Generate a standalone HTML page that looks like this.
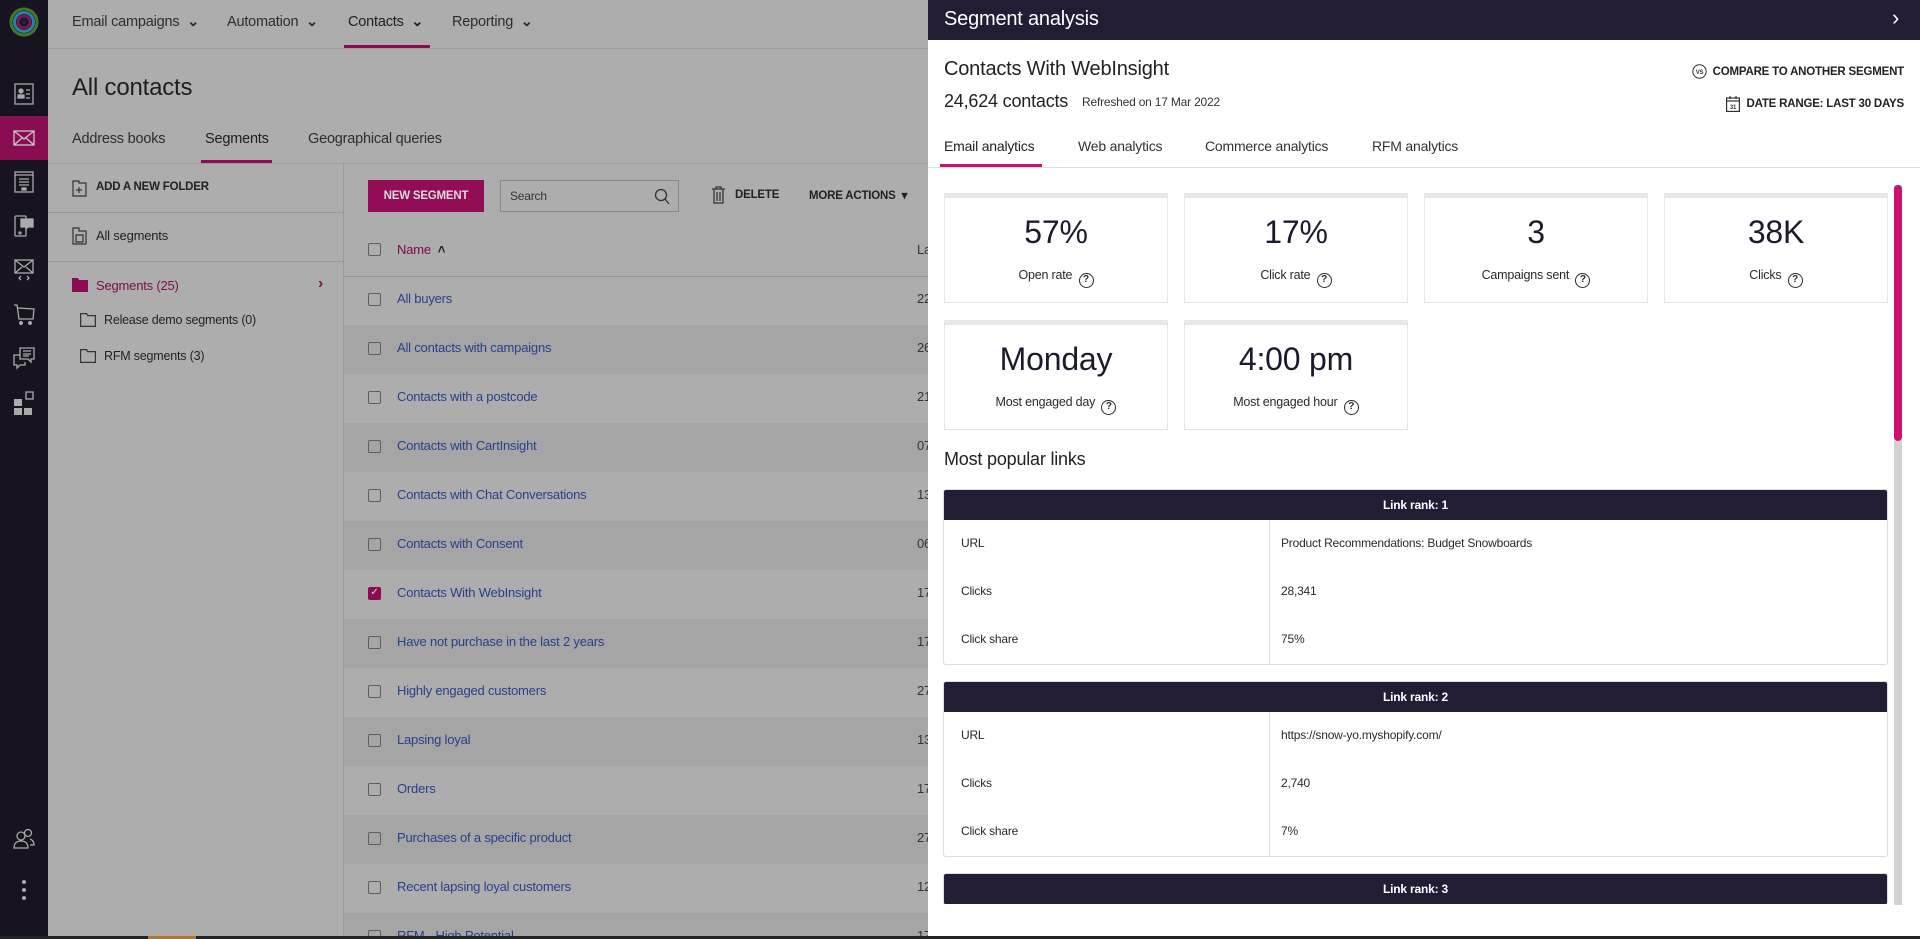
<!DOCTYPE html>
<html><head><meta charset="utf-8"><style>
*{box-sizing:border-box;margin:0;padding:0}
html{width:1920px;height:939px;overflow:hidden}
body{width:1920px;height:939px;overflow:hidden;font-family:"Liberation Sans",sans-serif;background:#adadad;position:relative;color:#2a2a2a;letter-spacing:-0.2px}
.a{position:absolute;white-space:nowrap}
#side{position:absolute;left:0;top:0;width:48px;height:939px;background:#17131f}
.ic{position:absolute;left:12px;width:24px;height:24px}
.nav{font-size:14.5px;color:#2d2d2d;top:14px}
#list{position:absolute;left:344px;top:0;width:584px;height:936px;overflow:hidden}
.row{position:absolute;left:0;width:584px;height:49px}
.row.d{background:#a5a5a5}
.cb{position:absolute;left:24px;top:17px;width:13px;height:13px;border:1.5px solid #5e5e5e;border-radius:2px}
.rt{position:absolute;left:53px;top:15px;font-size:13px;color:#26418a}
.rd{position:absolute;left:573px;top:15px;font-size:13px;color:#333}
#panel{position:absolute;left:928px;top:0;width:992px;height:936px;background:#fff;overflow:hidden}
.card{position:absolute;width:224px;height:110px;border:1px solid #e6e6e6;border-top:5px solid #e8e8e8;text-align:center;background:#fff}
.card .n{position:absolute;left:0;right:0;top:16px;font-size:32px;color:#1d1a2e}
.card .l{position:absolute;left:0;right:0;top:70px;font-size:12.5px;color:#2a2a2a}
.q{display:inline-block;width:15px;height:15px;border:1.5px solid #2a2a2a;border-radius:50%;font-size:10px;line-height:12px;text-align:center;font-weight:bold;vertical-align:-3px;margin-left:3px;letter-spacing:0}
.tbl{position:absolute;left:15px;width:945px;border:1px solid #ddd;border-radius:3px;overflow:hidden}
.th{height:30px;background:#221d35;color:#fff;font-size:12px;font-weight:bold;text-align:center;line-height:30px}
.tr{height:48px;position:relative;font-size:12px;color:#2a2a2a}
.tr span{position:absolute;top:16px}
.tr .k{left:17px}.tr .v{left:337px}
.div{position:absolute;left:325px;top:30px;bottom:0;border-left:1px solid #ddd}
.rgt{position:absolute;right:16px;display:flex;align-items:center;gap:6px;font-size:11.5px;font-weight:bold;color:#222;white-space:nowrap}
</style></head><body>
<div id="side">
<svg class="a" style="left:9px;top:7px" width="30" height="30" viewBox="0 0 30 30"><circle cx="15" cy="15" r="13" fill="none" stroke="#3f7a2a" stroke-width="3"/><circle cx="15" cy="15" r="9.5" fill="none" stroke="#2b7fa8" stroke-width="3"/><circle cx="15" cy="15" r="6" fill="none" stroke="#7a1a55" stroke-width="3"/><circle cx="15" cy="15" r="2.5" fill="#2a2140"/></svg>
<div class="a" style="left:0;top:116px;width:48px;height:44px;background:#8a0c52"></div>
<svg class="ic" style="top:82px" viewBox="0 0 24 24" fill="none" stroke="#aaa" stroke-width="1.3"><rect x="3" y="2" width="18" height="20"/><circle cx="9" cy="9" r="2" fill="#aaa"/><path d="M6 16h6v-3H6z" fill="#aaa"/><path d="M14 8h4M14 12h4M14 16h4"/></svg>
<svg class="ic" style="top:126px" viewBox="0 0 24 24" fill="none" stroke="#c9c9c9" stroke-width="1.3"><rect x="2" y="5" width="20" height="14"/><path d="M2 5l10 8 10-8M2 19l8-7M22 19l-8-7"/></svg>
<svg class="ic" style="top:170px" viewBox="0 0 24 24" fill="none" stroke="#aaa" stroke-width="1.3"><rect x="3" y="2" width="18" height="20"/><path d="M3 5h18M7 9h10M7 12h10M7 15h10"/><rect x="10" y="18" width="4" height="2" fill="#aaa"/></svg>
<svg class="ic" style="top:214px" viewBox="0 0 24 24" fill="none" stroke="#aaa" stroke-width="1.3"><rect x="3" y="2" width="11" height="20" rx="1"/><path d="M9 5h12v8h-5l-2 2v-2H9z" fill="#aaa"/><circle cx="8" cy="19" r="1"/></svg>
<svg class="ic" style="top:258px" viewBox="0 0 24 24" fill="none" stroke="#aaa" stroke-width="1.3"><rect x="3" y="2" width="18" height="13"/><path d="M3 2l9 7 9-7M3 15l7-6M21 15l-7-6M9 18l-2 2 2 2M15 18l2 2-2 2"/></svg>
<svg class="ic" style="top:302px" viewBox="0 0 24 24" fill="none" stroke="#aaa" stroke-width="1.3"><path d="M2 3h3l2 14h14l1-10-16-1"/><circle cx="9" cy="21" r="1.3" fill="#aaa"/><circle cx="18" cy="21" r="1.3" fill="#aaa"/></svg>
<svg class="ic" style="top:346px" viewBox="0 0 24 24" fill="none" stroke="#aaa" stroke-width="1.3"><path d="M8 2h14v11h-3v3l-3-3H8z"/><path d="M11 5h8M11 8h8M11 10h6"/><path d="M8 9H2v10h3v3l3-3h5v-3"/></svg>
<svg class="ic" style="top:391px" viewBox="0 0 24 24"><rect x="2" y="8" width="8" height="7" fill="#aaa"/><rect x="2" y="17" width="8" height="7" fill="#aaa"/><rect x="12" y="17" width="8" height="7" fill="#aaa"/><rect x="14" y="1" width="7" height="7" fill="none" stroke="#aaa" stroke-width="1.3"/></svg>
<svg class="ic" style="top:827px" viewBox="0 0 24 24" fill="none" stroke="#aaa" stroke-width="1.3"><circle cx="9" cy="9" r="4"/><path d="M2 21c0-5 3-7 7-7s7 2 7 7z"/><circle cx="16" cy="6" r="3.5"/><path d="M18 12c3 1 4 3 4 6h-4"/></svg>
<div class="a" style="left:22px;top:880px;width:4px;height:4px;border-radius:2px;background:#aaa"></div>
<div class="a" style="left:22px;top:888px;width:4px;height:4px;border-radius:2px;background:#aaa"></div>
<div class="a" style="left:22px;top:896px;width:4px;height:4px;border-radius:2px;background:#aaa"></div>
</div>
<div class="a" style="left:48px;top:48px;width:880px;border-top:1px solid #9a9a9a"></div>
<div class="a nav" style="left:72px">Email campaigns &nbsp;<b>&#8964;</b></div>
<div class="a nav" style="left:227px">Automation &nbsp;<b>&#8964;</b></div>
<div class="a nav" style="left:348px;color:#1e1e1e">Contacts &nbsp;<b>&#8964;</b></div>
<div class="a nav" style="left:452px">Reporting &nbsp;<b>&#8964;</b></div>
<div class="a" style="left:344px;top:45px;width:86px;height:3px;background:#8a0c52"></div>
<div class="a" style="left:72px;top:74px;font-size:24px;color:#1e1e1e">All contacts</div>
<div class="a" style="left:72px;top:131px;font-size:14.5px;color:#2d2d2d">Address books</div>
<div class="a" style="left:205px;top:131px;font-size:14.5px;color:#1e1e1e">Segments</div>
<div class="a" style="left:308px;top:131px;font-size:14.5px;color:#2d2d2d">Geographical queries</div>
<div class="a" style="left:201px;top:160px;width:71px;height:3px;background:#8a0c52"></div>
<div class="a" style="left:48px;top:163px;width:880px;border-top:1px solid #9a9a9a"></div>
<div class="a" style="left:343px;top:164px;height:775px;border-left:1px solid #999"></div>
<svg class="a" style="left:72px;top:179px" width="15" height="18" viewBox="0 0 15 18" fill="none" stroke="#333" stroke-width="1.2"><path d="M1 2h6v2h7v13H1z"/><path d="M7 8v6M4 11h6"/></svg>
<div class="a" style="left:96px;top:181px;font-size:11.5px;font-weight:bold;color:#222">ADD A NEW FOLDER</div>
<div class="a" style="left:48px;top:212px;width:295px;border-top:1px solid #999"></div>
<svg class="a" style="left:72px;top:227px" width="15" height="18" viewBox="0 0 15 18" fill="none" stroke="#333" stroke-width="1.2"><path d="M1 1h6v3h7v13H1z"/><path d="M4 8h7v7H4z"/></svg>
<div class="a" style="left:96px;top:228px;font-size:13px;color:#222">All segments</div>
<div class="a" style="left:48px;top:261px;width:295px;border-top:1px solid #999"></div>
<svg class="a" style="left:72px;top:278px" width="16" height="14" viewBox="0 0 16 14"><path d="M0 0h6l1 2h9v12H0z" fill="#8a0c52"/></svg>
<div class="a" style="left:96px;top:278px;font-size:13px;color:#7d0a4a">Segments (25)</div>
<div class="a" style="left:318px;top:275px;font-size:16px;color:#8a0c52;font-weight:bold">&#8250;</div>
<svg class="a" style="left:80px;top:313px" width="16" height="14" viewBox="0 0 16 14" fill="none" stroke="#333" stroke-width="1.2"><path d="M.6.6h6l1 2h7.8v10.8H.6z"/></svg>
<div class="a" style="left:104px;top:313px;font-size:12.5px;color:#222">Release demo segments (0)</div>
<svg class="a" style="left:80px;top:349px" width="16" height="14" viewBox="0 0 16 14" fill="none" stroke="#333" stroke-width="1.2"><path d="M.6.6h6l1 2h7.8v10.8H.6z"/></svg>
<div class="a" style="left:104px;top:349px;font-size:12.5px;color:#222">RFM segments (3)</div>
<div class="a" style="left:368px;top:180px;width:116px;height:32px;background:#920c56;color:#ddd;font-size:11.5px;font-weight:bold;text-align:center;line-height:32px">NEW SEGMENT</div>
<div class="a" style="left:500px;top:180px;width:179px;height:32px;border:1px solid #8a8a8a;font-size:12px;color:#333;padding:8px 9px">Search</div>
<svg class="a" style="left:654px;top:188px" width="16" height="17" viewBox="0 0 16 17" fill="none" stroke="#333" stroke-width="1.3"><circle cx="7" cy="7" r="5.5"/><path d="M11 11l4 5"/></svg>
<svg class="a" style="left:712px;top:186px" width="13" height="18" viewBox="0 0 13 18" fill="none" stroke="#333" stroke-width="1.3"><path d="M0 3h13M4 3V1h5v2M2 3v14h9V3M5 6v9M8 6v9"/></svg>
<div class="a" style="left:735px;top:189px;font-size:11.5px;font-weight:bold;color:#222">DELETE</div>
<div class="a" style="left:809px;top:188px;font-size:11.5px;font-weight:bold;color:#222">MORE ACTIONS &nbsp;&#9662;</div>
<div id="list">
<div class="row" style="top:226px"><div class="cb" style="top:17px"></div><div class="rt" style="top:16px;color:#7d0a4a">Name &nbsp;<b style="color:#222">&#708;</b></div><div class="rd" style="top:16px">La</div></div>
<div class="a" style="left:0;top:276px;width:584px;border-top:1px solid #999"></div>
<div class="row" style="top:276px"><div class="cb"></div><div class="rt">All buyers</div><div class="rd">22</div></div>
<div class="row d" style="top:325px"><div class="cb"></div><div class="rt">All contacts with campaigns</div><div class="rd">26</div></div>
<div class="row" style="top:374px"><div class="cb"></div><div class="rt">Contacts with a postcode</div><div class="rd">21</div></div>
<div class="row d" style="top:423px"><div class="cb"></div><div class="rt">Contacts with CartInsight</div><div class="rd">07</div></div>
<div class="row" style="top:472px"><div class="cb"></div><div class="rt">Contacts with Chat Conversations</div><div class="rd">13</div></div>
<div class="row d" style="top:521px"><div class="cb"></div><div class="rt">Contacts with Consent</div><div class="rd">06</div></div>
<div class="row" style="top:570px"><div class="cb" style="background:#8a0c52;border-color:#8a0c52;color:#ddd;font-size:10px;line-height:10px;text-align:center">&#10003;</div><div class="rt">Contacts With WebInsight</div><div class="rd">17</div></div>
<div class="row d" style="top:619px"><div class="cb"></div><div class="rt">Have not purchase in the last 2 years</div><div class="rd">17</div></div>
<div class="row" style="top:668px"><div class="cb"></div><div class="rt">Highly engaged customers</div><div class="rd">27</div></div>
<div class="row d" style="top:717px"><div class="cb"></div><div class="rt">Lapsing loyal</div><div class="rd">13</div></div>
<div class="row" style="top:766px"><div class="cb"></div><div class="rt">Orders</div><div class="rd">17</div></div>
<div class="row d" style="top:815px"><div class="cb"></div><div class="rt">Purchases of a specific product</div><div class="rd">27</div></div>
<div class="row" style="top:864px"><div class="cb"></div><div class="rt">Recent lapsing loyal customers</div><div class="rd">12</div></div>
<div class="row d" style="top:913px"><div class="cb"></div><div class="rt">RFM - High Potential</div><div class="rd">17</div></div>
</div>
<div id="panel">
<div class="a" style="left:0;top:0;width:992px;height:40px;background:#221d35"></div>
<div class="a" style="left:16px;top:8px;font-size:20px;color:#fff">Segment analysis</div>
<div class="a" style="left:964px;top:5px;font-size:22px;color:#fff">&#8250;</div>
<div class="a" style="left:16px;top:58px;font-size:20px;color:#222">Contacts With WebInsight</div>
<div class="a" style="left:16px;top:91px;font-size:18px;color:#222">24,624 contacts</div>
<div class="a" style="left:154px;top:95px;font-size:12px;color:#333">Refreshed on 17 Mar 2022</div>
<div class="rgt" style="top:64px"><svg width="15" height="15" viewBox="0 0 15 15"><circle cx="7.5" cy="7.5" r="6.7" fill="none" stroke="#333" stroke-width="1"/><text x="7.5" y="10" font-size="6" text-anchor="middle" font-family="Liberation Sans" fill="#333">VS</text></svg>COMPARE TO ANOTHER SEGMENT</div>
<div class="rgt" style="top:95px"><svg width="14" height="17" viewBox="0 0 14 17" fill="none" stroke="#333" stroke-width="1.2"><rect x=".6" y="3" width="12.8" height="13.4"/><path d="M.6 6h12.8M4 1v3M10 1v3"/><text x="7" y="14" font-size="6" text-anchor="middle" font-family="Liberation Sans" fill="#333" stroke="none">31</text></svg>DATE RANGE: LAST 30 DAYS</div>
<div class="a" style="left:16px;top:138px;font-size:14px;color:#222">Email analytics</div>
<div class="a" style="left:150px;top:138px;font-size:14px;color:#333">Web analytics</div>
<div class="a" style="left:277px;top:138px;font-size:14px;color:#333">Commerce analytics</div>
<div class="a" style="left:444px;top:138px;font-size:14px;color:#333">RFM analytics</div>
<div class="a" style="left:12px;top:164px;width:102px;height:3px;background:#c8106e"></div>
<div class="a" style="left:0;top:167px;width:992px;border-top:1px solid #ddd"></div>
<div class="card" style="left:16px;top:193px"><div class="n">57%</div><div class="l">Open rate <span class="q">?</span></div></div>
<div class="card" style="left:256px;top:193px"><div class="n">17%</div><div class="l">Click rate <span class="q">?</span></div></div>
<div class="card" style="left:496px;top:193px"><div class="n">3</div><div class="l">Campaigns sent <span class="q">?</span></div></div>
<div class="card" style="left:736px;top:193px"><div class="n">38K</div><div class="l">Clicks <span class="q">?</span></div></div>
<div class="card" style="left:16px;top:320px"><div class="n">Monday</div><div class="l">Most engaged day <span class="q">?</span></div></div>
<div class="card" style="left:256px;top:320px"><div class="n">4:00 pm</div><div class="l">Most engaged hour <span class="q">?</span></div></div>
<div class="a" style="left:16px;top:449px;font-size:18px;color:#222">Most popular links</div>
<div class="tbl" style="top:489px"><div class="th">Link rank: 1</div><div class="div"></div>
<div class="tr"><span class="k">URL</span><span class="v">Product Recommendations: Budget Snowboards</span></div>
<div class="tr"><span class="k">Clicks</span><span class="v">28,341</span></div>
<div class="tr"><span class="k">Click share</span><span class="v">75%</span></div></div>
<div class="tbl" style="top:681px"><div class="th">Link rank: 2</div><div class="div"></div>
<div class="tr"><span class="k">URL</span><span class="v">https://snow-yo.myshopify.com/</span></div>
<div class="tr"><span class="k">Clicks</span><span class="v">2,740</span></div>
<div class="tr"><span class="k">Click share</span><span class="v">7%</span></div></div>
<div class="tbl" style="top:873px;height:32px;border-bottom:none"><div class="th">Link rank: 3</div></div>
<div class="a" style="left:0;top:905px;width:992px;height:31px;background:#fff"></div>
<div class="a" style="left:966px;top:185px;width:8px;height:720px;background:#d2d2d2"></div>
<div class="a" style="left:966px;top:185px;width:8px;height:256px;background:#d0106f;border-radius:4px"></div>
</div>
<div class="a" style="left:0;top:936px;width:1920px;height:3px;background:#222"></div>
<div class="a" style="left:148px;top:936px;width:48px;height:3px;background:#b8742c"></div>
</body></html>
